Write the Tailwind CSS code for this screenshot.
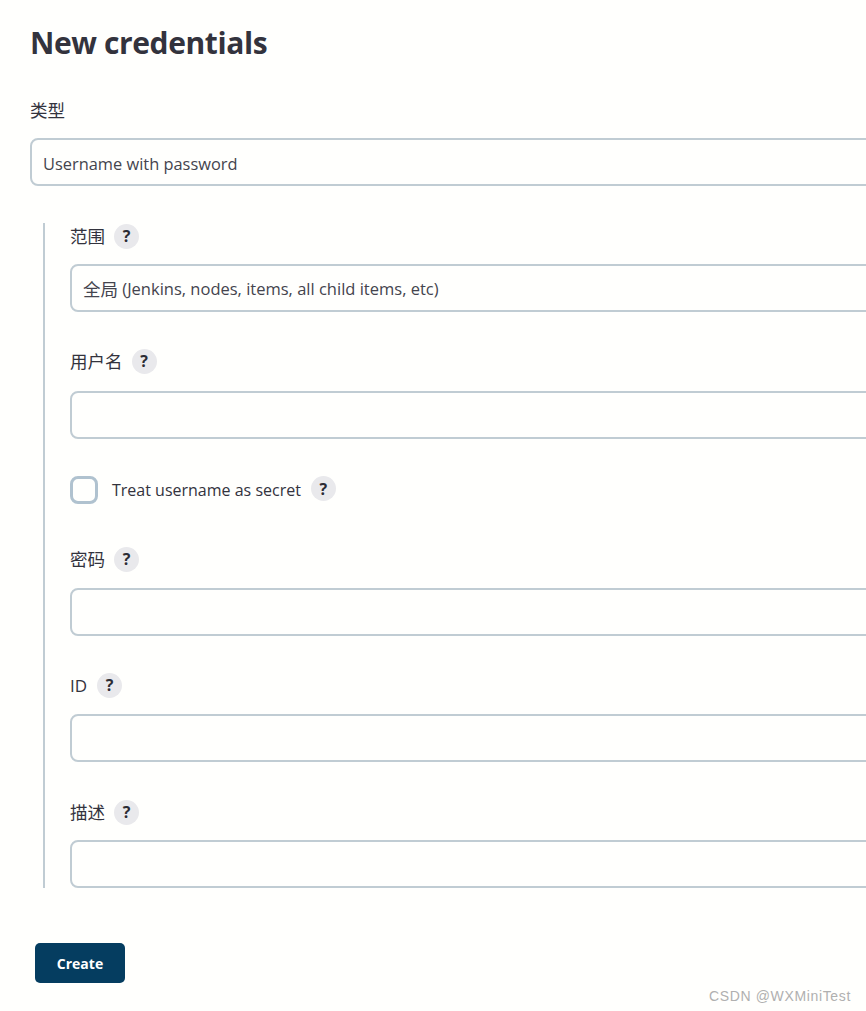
<!DOCTYPE html>
<html lang="zh">
<head>
<meta charset="utf-8">
<title>New credentials</title>
<script src="https://cdn.jsdelivr.net/npm/@tailwindcss/browser@4"></script>
</head>
<body class="bg-white">
<div class="relative h-[1011px] w-[866px] overflow-hidden bg-[#fffffd] text-[16.4px] text-[#33333d] font-['Open_Sans','Noto_Sans_CJK_SC',sans-serif]">
  <div class="w-[1000px] pl-[30px] pt-[20px]">
    <h1 class="h-[46px] text-[30px] leading-[46px] font-bold tracking-[-0.4px]">New credentials</h1>

    <div class="mt-[32px] h-[25px] text-[17.5px] leading-[25px]">类型</div>
    <div class="mt-[15px] flex h-[48px] items-center rounded-[8px] border-2 border-[#c0ccd3] pl-[11px] pt-[4px] text-[#44444e]">Username with password</div>

    <div class="mt-[37px] ml-[13px] border-l-2 border-[#c0ccd3] pl-[25px]">
      <div class="flex h-[26px] items-center gap-[9px]">
        <span class="text-[17.5px]">范围</span>
        <span class="flex h-[25px] w-[25px] items-center justify-center rounded-full bg-[#e9e9ec] text-[16px] font-bold text-[#2c2c35]">?</span>
      </div>
      <div class="mt-[15px] flex h-[48px] items-center rounded-[8px] border-2 border-[#c0ccd3] pl-[11px] pt-[3px] text-[16.5px] text-[#44444e]"><span class="text-[17.5px]">全局</span>&nbsp;(Jenkins, nodes, items, all child items, etc)</div>

      <div class="mt-[36px] flex h-[26px] items-center gap-[9px]">
        <span class="text-[17.5px]">用户名</span>
        <span class="flex h-[25px] w-[25px] items-center justify-center rounded-full bg-[#e9e9ec] text-[16px] font-bold text-[#2c2c35]">?</span>
      </div>
      <div class="mt-[17px] h-[48px] rounded-[8px] border-2 border-[#c0ccd3]"></div>

      <div class="mt-[37px] flex h-[28px] items-center">
        <span class="h-[28px] w-[28px] rounded-[8px] border-[3px] border-[#b0c2cf]"></span>
        <span class="ml-[14px] text-[16px] font-medium">Treat username as secret</span>
        <span class="ml-[10px] mb-[3px] flex h-[25px] w-[25px] items-center justify-center rounded-full bg-[#e9e9ec] text-[16px] font-bold text-[#2c2c35]">?</span>
      </div>

      <div class="mt-[42px] flex h-[26px] items-center gap-[9px]">
        <span class="text-[17.5px]">密码</span>
        <span class="flex h-[25px] w-[25px] items-center justify-center rounded-full bg-[#e9e9ec] text-[16px] font-bold text-[#2c2c35]">?</span>
      </div>
      <div class="mt-[16px] h-[48px] rounded-[8px] border-2 border-[#c0ccd3]"></div>

      <div class="mt-[36px] flex h-[26px] items-center gap-[10px]">
        <span class="pt-[2px] text-[17px]">ID</span>
        <span class="flex h-[25px] w-[25px] items-center justify-center rounded-full bg-[#e9e9ec] text-[16px] font-bold text-[#2c2c35]">?</span>
      </div>
      <div class="mt-[16px] h-[48px] rounded-[8px] border-2 border-[#c0ccd3]"></div>

      <div class="mt-[37px] flex h-[26px] items-center gap-[9px]">
        <span class="text-[17.5px]">描述</span>
        <span class="flex h-[25px] w-[25px] items-center justify-center rounded-full bg-[#e9e9ec] text-[16px] font-bold text-[#2c2c35]">?</span>
      </div>
      <div class="mt-[15px] h-[48px] rounded-[8px] border-2 border-[#c0ccd3]"></div>
    </div>

    <button class="mt-[55px] ml-[5px] flex h-[40px] w-[90px] items-center justify-center rounded-[5px] bg-[#053d60] text-[14px] font-bold text-white">Create</button>
  </div>
  <div class="absolute top-[986px] right-[15px] font-['Liberation_Sans',sans-serif] text-[14px] leading-[20px] tracking-[0.65px] text-[#b0b0b0]">CSDN @WXMiniTest</div>
</div>
</body>
</html>
